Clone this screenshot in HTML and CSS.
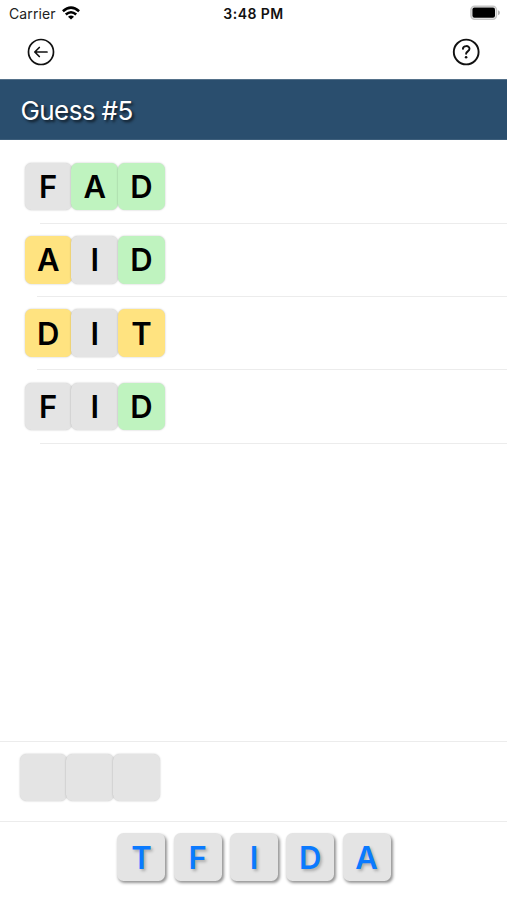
FILE: index.html
```html
<!DOCTYPE html>
<html lang="en">
<head>
<meta charset="utf-8">
<title>Guess</title>
<link rel="stylesheet" href="styles.css">
</head>
<body>
<div class="status">
  <div class="carrier"><span>Carrier</span>
    <svg class="wifi" viewBox="0 0 18 14" width="18" height="14"><g fill="none" stroke="#000" stroke-width="2.6"><path d="M.9 5.2Q9-1.8 17.1 5.2"/><path d="M3.8 8.5Q9 4 14.2 8.5"/></g><path d="M6 10.7Q9 8.2 12 10.7L9 13.6Z"/></svg>
  </div>
  <div class="time">3:48 PM</div>
  <svg class="battery" viewBox="0 0 31 16" width="31" height="16"><rect x="1" y="1.2" width="25.4" height="13" rx="3.6" fill="#fff" stroke="#c6c6c6" stroke-width="1.6"/><rect x="2.4" y="2.6" width="22.6" height="10.2" rx="2"/><path d="M28 5.2Q30 6 30 7.7T28 10.2Z" fill="#b5b5b5"/></svg>
</div>
<nav class="nav">
  <svg viewBox="0 0 28 28" width="28" height="28" fill="none" stroke="#111" stroke-width="1.7" stroke-linecap="round" stroke-linejoin="round"><circle cx="14" cy="14" r="12.5"/><path d="M20 14H8M12.3 9.5L7.8 14l4.5 4.5"/></svg>
  <svg viewBox="0 0 28 28" width="28" height="28" fill="none" stroke="#111" stroke-width="1.9" stroke-linecap="round" stroke-linejoin="round"><circle cx="14.2" cy="14" r="12.4"/><path d="M10.9 10.9C11.1 7.2 17.5 7.1 17.5 10.8C17.5 13.4 14.1 13.3 14.1 15.8"/><circle cx="14.1" cy="19.2" r="1.3" fill="#111" stroke="none"/></svg>
</nav>
<header class="title">Guess #5</header>
<main class="guesses">
  <div class="row"><span class="tile">F</span><span class="tile hit">A</span><span class="tile hit">D</span></div>
  <div class="row wide"><span class="tile near">A</span><span class="tile">I</span><span class="tile hit">D</span></div>
  <div class="row wide"><span class="tile near">D</span><span class="tile">I</span><span class="tile near">T</span></div>
  <div class="row"><span class="tile">F</span><span class="tile">I</span><span class="tile hit">D</span></div>
</main>
<section class="entry"><span class="tile"></span><span class="tile"></span><span class="tile"></span></section>
<footer class="keys"><button>T</button><button>F</button><button>I</button><button>D</button><button>A</button></footer>
</body>
</html>
```
FILE: styles.css
```css
* { box-sizing: border-box; }
body {
  margin: 0;
  height: 900px;
  overflow: hidden;
  display: flex;
  flex-direction: column;
  background: #fff;
  color: #000;
  font-family: Inter, "Liberation Sans", sans-serif;
}
.status {
  height: 28px;
  flex: none;
  display: grid;
  grid-template-columns: 1fr auto 1fr;
  align-items: center;
  padding: 0 6px 1px 9px;
  font-size: 14px;
}
.carrier { display: flex; align-items: center; gap: 6px; color: #222; letter-spacing: .1px; }
.wifi { margin-top: -1px; }
.time {
  margin-left: -3px;
  font-size: 14px;
  font-weight: 600;
  letter-spacing: .45px;
  color: #111;
}
.battery { justify-self: end; margin-top: -1px; }
.nav {
  height: 51px;
  flex: none;
  display: flex;
  justify-content: space-between;
  padding: 10px 27px 0;
}
.title {
  height: 61px;
  flex: none;
  padding: 1px 0 0 20.5px;
  background: #2a4e6e;
  border-top: 1px solid #55718a;
  border-bottom: 1px solid #3d5e7b;
  line-height: 60px;
  color: #fff;
  font-size: 26px;
  letter-spacing: -.6px;
  text-shadow: 2px 2px 3px rgba(0, 0, 0, .7);
}
.guesses { flex: 1; padding-top: 10.4px; }
.row {
  height: 73.3px;
  display: flex;
  align-items: center;
  padding: 0 0 1px 24.6px;
  background: linear-gradient(#ececec, #ececec) 40px 100% / 100% 1px no-repeat;
}
.row.wide { background-position-x: 37px; }
.tile {
  width: 47.2px;
  height: 47.6px;
  display: flex;
  align-items: center;
  justify-content: center;
  border-radius: 6.5px;
  background: #e4e4e4;
  box-shadow: 0 0 2px rgba(0, 0, 0, .25);
  font-size: 31px;
  font-weight: 600;
}
.tile + .tile { margin-left: -.6px; }
.hit { background: #bff3bf; }
.near { background: #ffe380; }
.entry {
  height: 80px;
  flex: none;
  display: flex;
  padding: 11.5px 0 0 19.8px;
  border-top: 1px solid #ececec;
}
.keys {
  height: 79px;
  flex: none;
  display: flex;
  justify-content: center;
  gap: 8.3px;
  padding: 11px 0 0 1px;
  border-top: 1px solid #ececec;
}
.keys button {
  width: 48px;
  height: 48px;
  padding: 0;
  border: 0;
  border-radius: 6.5px;
  background: #e4e4e4;
  box-shadow: 1.5px 2px 3px rgba(0, 0, 0, .42);
  color: #0a7aff;
  font: 600 31px Inter, "Liberation Sans", sans-serif;
  text-shadow: 2px 2px 3px rgba(0, 0, 0, .25);
}
```
